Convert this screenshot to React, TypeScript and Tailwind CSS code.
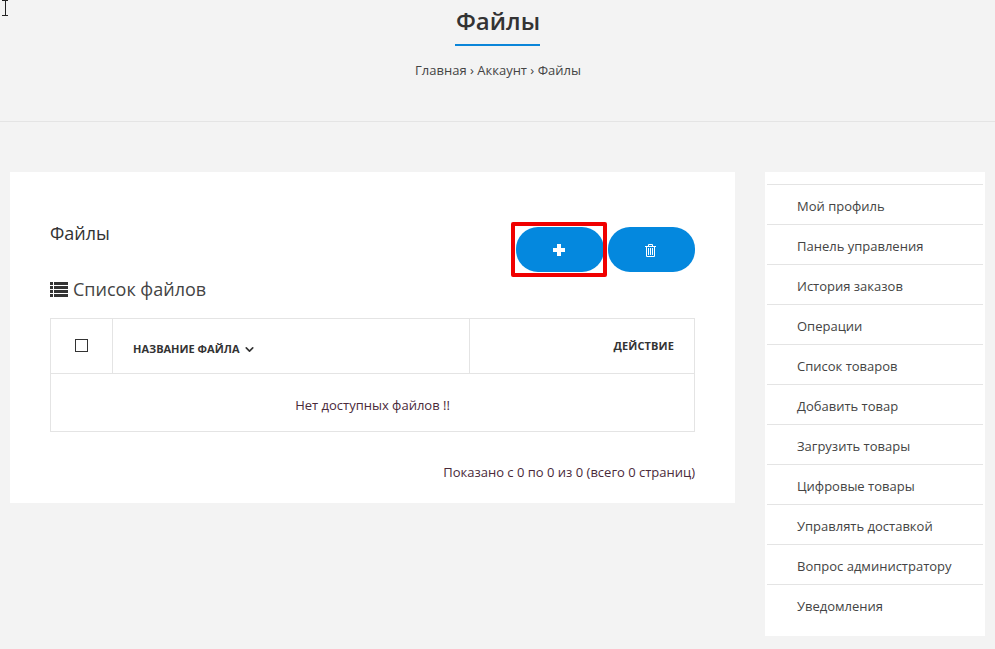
import React from "react";
import { ChevronDown } from "lucide-react";

const menu = ["Мой профиль","Панель управления","История заказов","Операции","Список товаров","Добавить товар","Загрузить товары","Цифровые товары","Управлять доставкой","Вопрос администратору","Уведомления"];

export default function App() {
  return (
    <div className="relative h-[649px] w-[995px] overflow-hidden bg-[#f3f3f3] font-['Open_Sans',sans-serif] text-[#333]">
      <svg className="absolute left-0 top-0" width="10" height="17" viewBox="0 0 10 17" fill="none" stroke="#222" strokeWidth="1">
        <path d="M2 0.500h6M2 15.500h6M5.500 0.500v15" />
      </svg>
      <header className="flex h-[122px] flex-col items-center border-b border-[#e4e4e4] pt-[3px]">
        <h1 className="border-b-2 border-[#0a85d9] pb-[6px] pl-[1px] text-[24px] font-semibold leading-[35px] text-[#333]">Файлы</h1>
        <p className="mt-[15px] pl-[1px] text-[13px] leading-[18px] text-[#444]">Главная › Аккаунт › Файлы</p>
      </header>
      <main className="flex items-start pl-[10px] pt-[50px]">
        <section className="h-[331px] w-[725px] bg-white px-10 pt-[50px]">
          <div className="flex items-start justify-between">
            <div>
              <h2 className="text-[18px] leading-[23px] text-[#333]">Файлы</h2>
              <h3 className="mt-[32px] flex items-center gap-[5px] text-[18px] leading-[24px] text-[#444]">
                <svg width="18" height="15" viewBox="0 0 18 15" fill="#333"><path d="M0 0h3v3H0zM4 0h14v3H4zM0 4h3v3H0zM4 4h14v3H4zM0 8h3v3H0zM4 8h14v3H4zM0 12h3v3H0zM4 12h14v3H4z" /></svg>
                Список файлов
              </h3>
            </div>
            <div className="flex items-start pt-[5px]">
              <div className="relative">
                <button className="flex h-[45px] w-[88px] items-center justify-center rounded-[22px] bg-[#0488de] text-white">
                  <svg width="12" height="12" viewBox="0 0 12 12" fill="#fff" className="mr-[2px]"><path d="M4 0h4v4h4v4H8v4H4V8H0V4h4z" /></svg>
                </button>
                <div className="absolute left-[-5px] top-[-5px] h-[55px] w-[96px] rounded-[2px] border-4 border-[#f00000]" />
              </div>
              <button className="ml-[4px] flex h-[45px] w-[87px] items-center justify-center rounded-[22px] bg-[#0488de] text-white">
                <svg width="11" height="13" viewBox="0 0 11 13" fill="none" stroke="#fff" strokeWidth="1" className="mr-[2px] mt-[1px]">
                  <path d="M0 2.500h11M3.500 2.500v-2h4v2M1.500 2.500v10h8v-10M3.500 4v7M5.500 4v7M7.500 4v7" />
                </svg>
              </button>
            </div>
          </div>
          <div className="mt-[17px] border border-[#e4e4e4]">
            <div className="flex h-[55px] border-b border-[#e4e4e4]">
              <div className="flex w-[62px] justify-center border-r border-[#e4e4e4] pt-[20px]">
                <div className="h-[13px] w-[13px] border border-[#333]" />
              </div>
              <div className="flex w-[357px] items-center gap-[3px] border-r border-[#e4e4e4] pl-[20px] pt-[6px] text-[11px] font-bold text-[#333]">
                НАЗВАНИЕ ФАЙЛА <ChevronDown size={13} strokeWidth={3} />
              </div>
              <div className="flex-1 pr-[20px] pt-[19px] text-right text-[11px] font-bold leading-[16px] tracking-[0.01em] text-[#333]">ДЕЙСТВИЕ</div>
            </div>
            <div className="flex h-[57px] items-center justify-center pt-[7px] text-[13px] text-[#4a2a3a]">Нет доступных файлов !!</div>
          </div>
          <p className="mt-[31px] text-right text-[13px] leading-[18px] text-[#4a2a3a]">Показано с 0 по 0 из 0 (всего 0 страниц)</p>
        </section>
        <aside className="ml-[30px] h-[464px] w-[220px] bg-white px-[2px] pt-[12px]">
          <ul className="border-t border-[#e4e4e4]">
            {menu.map((m, i) => (
              <li key={m} className={`flex h-[40px] items-center pl-[30px] text-[13px] text-[#444] ${i < menu.length - 1 ? "border-b border-[#e4e4e4] pt-[5px]" : "pt-[3px]"}`}>{m}</li>
            ))}
          </ul>
        </aside>
      </main>
    </div>
  );
}
